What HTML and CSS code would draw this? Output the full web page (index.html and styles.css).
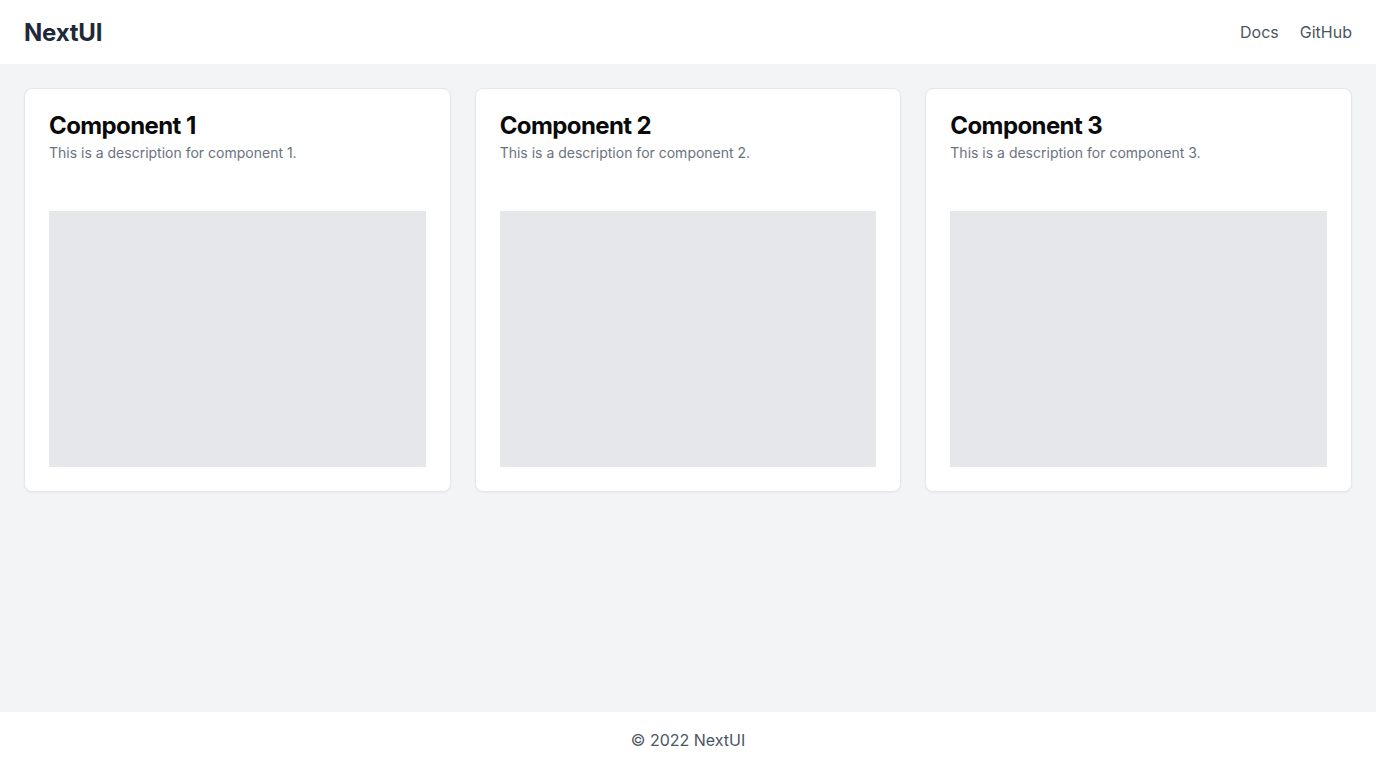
FILE: index.html
```html
<!DOCTYPE html>
<html lang="en">
<head>
    <meta charset="UTF-8">
    <meta name="viewport" content="width=device-width, initial-scale=1.0">
    <title>NextUI</title>
    <link rel="stylesheet" href="styles.css">
</head>
<body>

<div class="page">
    <header class="header">
        <div class="logo">NextUI</div>
        <nav class="nav">
            <a href="#">Docs</a>
            <a href="#">GitHub</a>
        </nav>
    </header>

    <main class="main">
        <div class="grid">
            <div class="card">
                <h2>Component 1</h2>
                <p>This is a description for component 1.</p>
                <div class="preview"></div>
            </div>
            <div class="card">
                <h2>Component 2</h2>
                <p>This is a description for component 2.</p>
                <div class="preview"></div>
            </div>
            <div class="card">
                <h2>Component 3</h2>
                <p>This is a description for component 3.</p>
                <div class="preview"></div>
            </div>
        </div>
    </main>

    <footer class="footer">© 2022 NextUI</footer>
</div>

</body>
</html>
```

FILE: styles.css
```css
body {
    margin: 0;
    font-family: Inter, "Noto Sans", sans-serif;
    background-color: #f3f4f6;
}
.page {
    display: flex;
    flex-direction: column;
    min-height: 100vh;
}
.header {
    height: 64px;
    padding: 0 24px;
    background: #fff;
    display: flex;
    align-items: center;
    justify-content: space-between;
}
.logo {
    font-size: 24px;
    font-weight: 700;
    color: #1f2937;
    letter-spacing: -0.2px;
}
.nav {
    display: flex;
    gap: 21px;
}
.nav a {
    color: #4b5563;
    text-decoration: none;
    font-size: 16px;
}
.main {
    flex: 1;
    padding: 24px;
}
.grid {
    display: grid;
    grid-template-columns: repeat(3, 1fr);
    gap: 24px;
}
.card {
    background: #fff;
    border: 1px solid #e5e7eb;
    border-radius: 8px;
    box-shadow: 0 1px 2px rgba(0, 0, 0, 0.05);
    padding: 24px;
}
.card h2 {
    margin: 0 0 4px;
    font-size: 24px;
    line-height: 26px;
    font-weight: 700;
    letter-spacing: -0.025em;
    color: #0a0a0a;
}
.card p {
    margin: 0;
    font-size: 14px;
    line-height: 20px;
    color: #6b7280;
}
.preview {
    margin-top: 48px;
    height: 256px;
    background: #e5e7eb;
}
.footer {
    height: 56px;
    background: #fff;
    display: flex;
    align-items: center;
    justify-content: center;
    color: #4b5563;
    font-size: 16px;
}
```
